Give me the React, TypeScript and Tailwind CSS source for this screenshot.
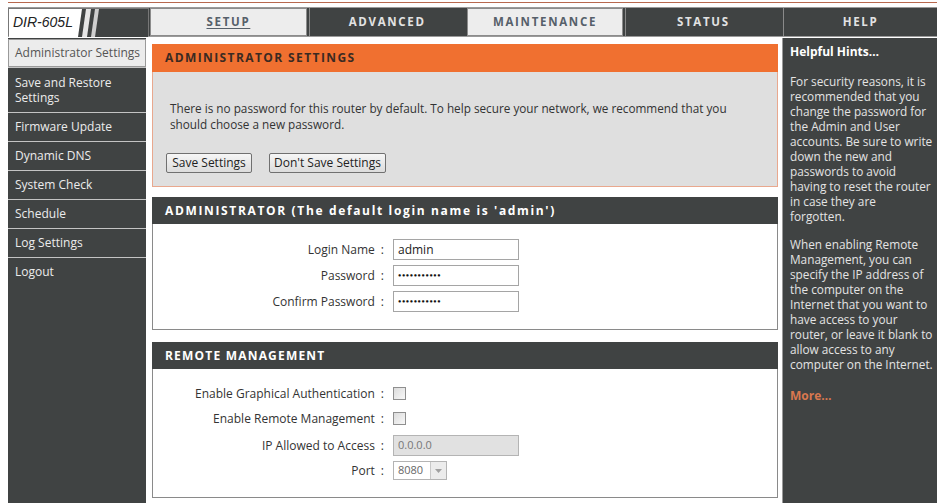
import React from "react";

const DARK = "bg-[#404343]";

// Top navigation tabs
const tabs = [
	{ label: "SETUP", active: true, width: "w-[157px]" },
	{ label: "ADVANCED", active: false, width: "w-[156px]" },
	{ label: "MAINTENANCE", active: true, width: "w-[157px]" },
	{ label: "STATUS", active: false, width: "w-[155px]" },
	{ label: "HELP", active: false, width: "w-[154px]" },
];

const sideItems = [
	"Save and Restore Settings",
	"Firmware Update",
	"Dynamic DNS",
	"System Check",
	"Schedule",
	"Log Settings",
	"Logout",
];

// Hint text, broken the way the narrow column shows it
const hintSecurity = [
	"For security reasons, it is",
	"recommended that you",
	"change the password for",
	"the Admin and User",
	"accounts. Be sure to write",
	"down the new and",
	"passwords to avoid",
	"having to reset the router",
	"in case they are",
	"forgotten.",
];

const hintRemote = [
	"When enabling Remote",
	"Management, you can",
	"specify the IP address of",
	"the computer on the",
	"Internet that you want to",
	"have access to your",
	"router, or leave it blank to",
	"allow access to any",
	"computer on the Internet.",
];

const Logo = () => (
	<div className="w-[139px] h-[28px] relative">
		<svg width="139" height="28" viewBox="0 0 139 28" className="absolute inset-0">
			<rect width="139" height="28" fill="#404343" />
			<polygon points="0,0 73,0 69,28 0,28" fill="#ffffff" />
			<polygon points="77,0 82,0 78,28 73,28" fill="#e6e6e6" />
			<polygon points="86,0 90,0 86,28 82,28" fill="#cfcfcf" />
		</svg>
		<span className="absolute left-[4px] top-[5px] text-[14px] leading-[17px] italic text-[#222] font-['Liberation_Sans',Arial,sans-serif]">
			DIR-605L
		</span>
	</div>
);

const Button = ({ children, className = "" }: { children: React.ReactNode; className?: string }) => (
	<button
		type="button"
		className={`h-[20px] px-[4px] text-[12px] leading-none text-[#222] border border-[#707070] rounded-[2px] bg-gradient-to-b from-[#f6f6f6] to-[#dcdcdc] ${className}`}
	>
		{children}
	</button>
);

const Label = ({ text }: { text: string }) => (
	<div className="w-[233px] text-right text-[12px] text-[#333] pr-[2px] whitespace-nowrap">
		{text}
		<span className="ml-[6px]">:</span>
	</div>
);

const TextBox = ({ children, disabled = false }: { children: React.ReactNode; disabled?: boolean }) => (
	<div
		className={`w-[126px] h-[21px] border flex items-center px-[4px] ${
			disabled ? "bg-[#e1e1e1] border-[#b4b4b4]" : "bg-white border-[#a5a5a5]"
		}`}
	>
		{children}
	</div>
);

const Dots = () => (
	<span className="text-[5.5px] leading-none tracking-[0.6px] text-[#111]">{"●●●●●●●●●●●"}</span>
);

const Checkbox = () => (
	<span className="inline-block w-[13px] h-[13px] border border-[#8f8f8f] bg-gradient-to-br from-[#dcdcdc] to-[#f8f8f8]" />
);

const SectionHeader = ({ children, className = "tracking-[1.2px]" }: { children: React.ReactNode; className?: string }) => (
	<div className={`h-[27px] ${DARK} flex items-center pl-[13px] text-[12px] font-bold text-white ${className}`}>
		{children}
	</div>
);

const HintLines = ({ lines, className = "" }: { lines: string[]; className?: string }) => (
	<div className={className}>
		{lines.map((l) => (
			<div key={l} className="whitespace-nowrap">
				{l}
			</div>
		))}
	</div>
);

export default function App() {
	return (
		<div className="w-[942px] h-[503px] bg-white overflow-hidden font-['Open_Sans',sans-serif]">
			{/* thin rule over the tab bar */}
			<div className="ml-[8px] mt-[2px] w-[929px] h-px bg-[#b8684e]" />

			{/* tab bar */}
			<div className={`ml-[8px] mt-[4px] w-[929px] h-[30px] ${DARK} border-y border-[#9a9a9a] flex items-stretch`}>
				<div className="border border-[#777]">
					<Logo />
				</div>
				{tabs.map((t, i) => (
					<div
						key={t.label}
						className={`${t.width} ${i === 0 ? "ml-px" : i === 4 ? "ml-[3px]" : "ml-[2px]"} flex items-center justify-center text-[11.5px] font-bold tracking-[1.7px] ${
							t.active
								? "bg-[#ededed] border border-[#8c8c8c] text-[#56606a]"
								: "text-[#e2e2e2] border-l border-[#8a8a8a]"
						} ${i === 0 ? "underline underline-offset-2" : ""}`}
					>
						{t.label}
					</div>
				))}
			</div>

			<div className="flex ml-[8px] mt-px h-[465px]">
				{/* left menu */}
				<div className={`w-[138px] ${DARK} flex flex-col`}>
					<div className="mt-px h-[28px] bg-[#ececec] border border-[#9a9a9a] flex items-center pl-[6px] text-[12px] text-[#555] whitespace-nowrap">
						Administrator Settings
					</div>
					{sideItems.map((item, i) => (
						<div
							key={item}
							className={`${
								i === 0 ? "h-[45px] leading-[15px] pt-[7px]" : "h-[29px] flex items-center"
							} border-t border-[#c4c4c4] pl-[7px] pr-[4px] text-[12px] text-[#ececec]`}
						>
							{item}
						</div>
					))}
				</div>

				{/* main panel */}
				<div className="w-[636px] pl-[6px] pr-[4px] pt-[6px] flex flex-col">
					<div>
						<div className="h-[28px] bg-[#f07030] flex items-center pl-[13px] text-[12px] font-bold tracking-[1.4px] text-[#3a2a22]">
							ADMINISTRATOR SETTINGS
						</div>
						<div className="h-[115px] bg-[#dfdfdf] border-x border-b border-[#e9a88e] pl-[13px] pt-[28px]">
							<p className="pl-[4px] text-[11.75px] leading-[16px] text-[#333] pr-[36px]">
								There is no password for this router by default. To help secure your network, we recommend that you should choose a new password.
							</p>
							<div className="mt-[21px] flex gap-[17px]">
								<Button className="w-[86px]">Save Settings</Button>
								<Button className="w-[117px]">Don't Save Settings</Button>
							</div>
						</div>
					</div>

					<div className="mt-[10px]">
						<SectionHeader className="tracking-[1.65px]">ADMINISTRATOR (The default login name is 'admin')</SectionHeader>
						<div className="h-[106px] bg-white border-x border-b border-[#8a8a8a] pt-[15px] flex flex-col gap-[5px]">
							<div className="flex items-center gap-[7px]">
								<Label text="Login Name" />
								<TextBox>
									<span className="text-[12px] text-[#222]">admin</span>
								</TextBox>
							</div>
							<div className="flex items-center gap-[7px]">
								<Label text="Password" />
								<TextBox>
									<Dots />
								</TextBox>
							</div>
							<div className="flex items-center gap-[7px]">
								<Label text="Confirm Password" />
								<TextBox>
									<Dots />
								</TextBox>
							</div>
						</div>
					</div>

					<div className="mt-[12px]">
						<SectionHeader>REMOTE MANAGEMENT</SectionHeader>
						<div className="h-[129px] bg-white border-x border-b border-[#8a8a8a] pt-[16px] flex flex-col">
							<div className="flex items-center gap-[7px] h-[17px]">
								<Label text="Enable Graphical Authentication" />
								<Checkbox />
							</div>
							<div className="flex items-center gap-[7px] h-[17px] mt-[8px]">
								<Label text="Enable Remote Management" />
								<Checkbox />
							</div>
							<div className="flex items-center gap-[7px] mt-[8px]">
								<Label text="IP Allowed to Access" />
								<TextBox disabled>
									<span className="text-[11px] text-[#777]">0.0.0.0</span>
								</TextBox>
							</div>
							<div className="flex items-center gap-[7px] mt-[5px]">
								<Label text="Port" />
								<div className="w-[54px] h-[19px] border border-[#b4b4b4] bg-white flex items-center">
									<span className="flex-1 pl-[4px] text-[11px] text-[#666]">8080</span>
									<span className="w-[16px] h-full border-l border-[#c8c8c8] bg-[#ececec] flex items-center justify-center">
										<svg width="7" height="4" viewBox="0 0 7 4">
											<polygon points="0,0 7,0 3.5,4" fill="#a0a0a0" />
										</svg>
									</span>
								</div>
							</div>
						</div>
					</div>
				</div>

				{/* hints column */}
				<div className={`w-[155px] ${DARK} border-l border-[#9a9a9a] pl-[7px] pt-[6px] text-[11.8px] leading-[15px] text-[#e4e4e4]`}>
					<div className="text-[12px] font-bold text-white">Helpful Hints…</div>
					<HintLines lines={hintSecurity} className="mt-[15px]" />
					<HintLines lines={hintRemote} className="mt-[13px]" />
					<p className="mt-[16px] text-[12px] font-bold text-[#d9784f]">More…</p>
				</div>
			</div>
		</div>
	);
}
